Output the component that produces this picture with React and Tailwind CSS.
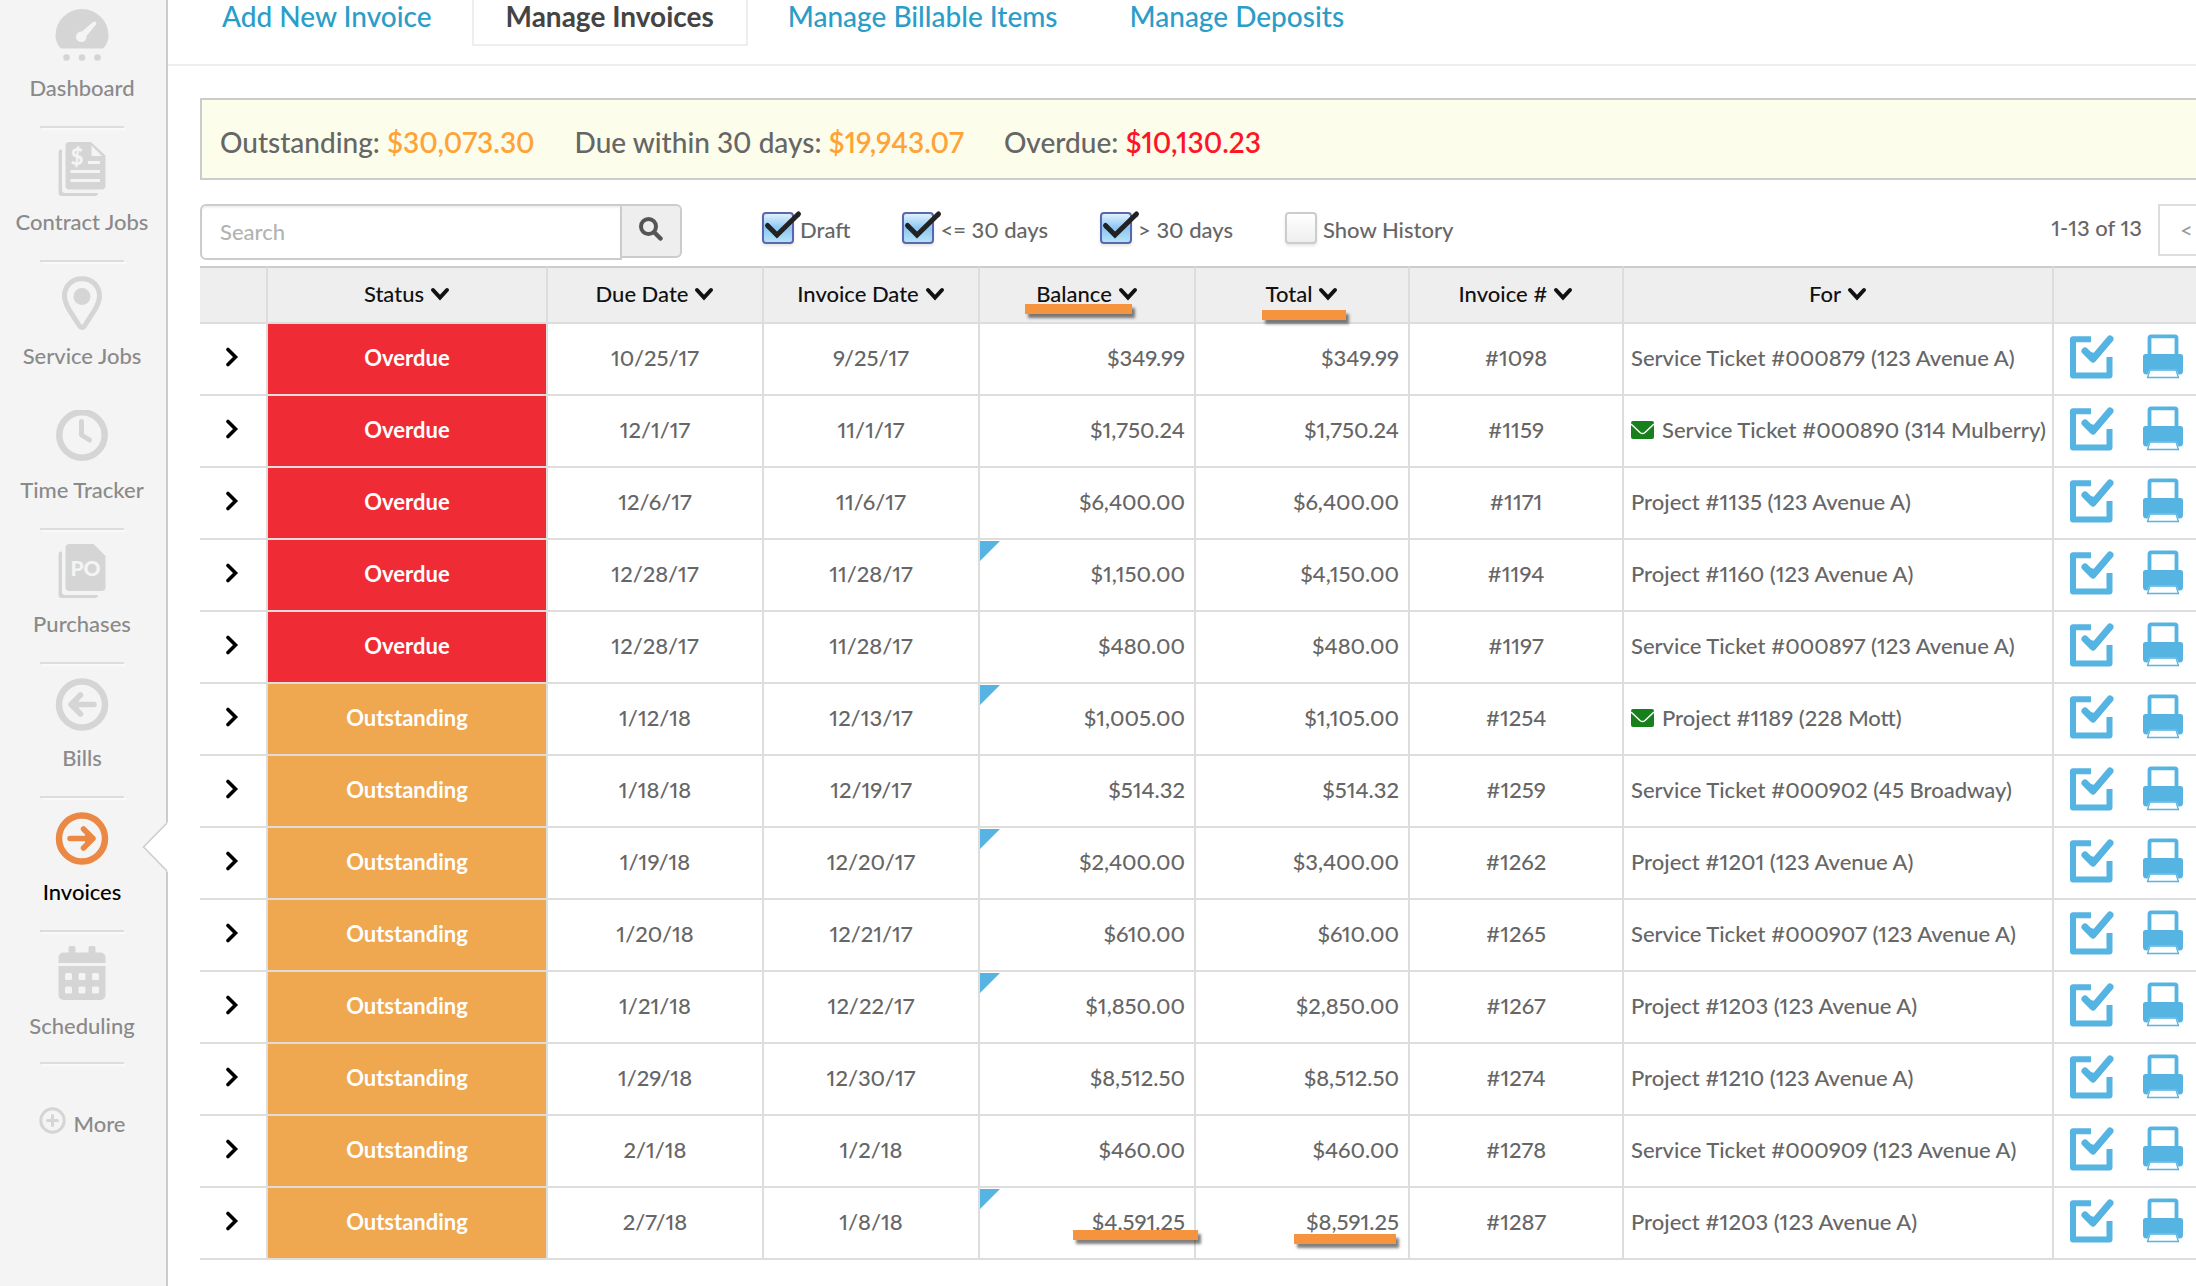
import { useState } from "react";
import clsx from "clsx";

const invoices = [
  { id: "1098", status: "Overdue", due: "10/25/17", date: "9/25/17", balance: "$349.99", total: "$349.99", target: "Service Ticket #000879 (123 Avenue A)" },
  { id: "1159", status: "Overdue", due: "12/1/17", date: "11/1/17", balance: "$1,750.24", total: "$1,750.24", target: "Service Ticket #000890 (314 Mulberry)", emailed: true },
  { id: "1171", status: "Overdue", due: "12/6/17", date: "11/6/17", balance: "$6,400.00", total: "$6,400.00", target: "Project #1135 (123 Avenue A)" },
  { id: "1194", status: "Overdue", due: "12/28/17", date: "11/28/17", balance: "$1,150.00", total: "$4,150.00", target: "Project #1160 (123 Avenue A)", partial: true },
  { id: "1197", status: "Overdue", due: "12/28/17", date: "11/28/17", balance: "$480.00", total: "$480.00", target: "Service Ticket #000897 (123 Avenue A)" },
  { id: "1254", status: "Outstanding", due: "1/12/18", date: "12/13/17", balance: "$1,005.00", total: "$1,105.00", target: "Project #1189 (228 Mott)", emailed: true, partial: true },
  { id: "1259", status: "Outstanding", due: "1/18/18", date: "12/19/17", balance: "$514.32", total: "$514.32", target: "Service Ticket #000902 (45 Broadway)" },
  { id: "1262", status: "Outstanding", due: "1/19/18", date: "12/20/17", balance: "$2,400.00", total: "$3,400.00", target: "Project #1201 (123 Avenue A)", partial: true },
  { id: "1265", status: "Outstanding", due: "1/20/18", date: "12/21/17", balance: "$610.00", total: "$610.00", target: "Service Ticket #000907 (123 Avenue A)" },
  { id: "1267", status: "Outstanding", due: "1/21/18", date: "12/22/17", balance: "$1,850.00", total: "$2,850.00", target: "Project #1203 (123 Avenue A)", partial: true },
  { id: "1274", status: "Outstanding", due: "1/29/18", date: "12/30/17", balance: "$8,512.50", total: "$8,512.50", target: "Project #1210 (123 Avenue A)" },
  { id: "1278", status: "Outstanding", due: "2/1/18", date: "1/2/18", balance: "$460.00", total: "$460.00", target: "Service Ticket #000909 (123 Avenue A)" },
  { id: "1287", status: "Outstanding", due: "2/7/18", date: "1/8/18", balance: "$4,591.25", total: "$8,591.25", target: "Project #1203 (123 Avenue A)", partial: true, marked: true },
];

const columns = [
  { label: "Status", width: "w-[280px]" },
  { label: "Due Date", width: "w-[216px]" },
  { label: "Invoice Date", width: "w-[216px]" },
  { label: "Balance", width: "w-[216px]", mark: "left-[45px] top-9 w-[107px]" },
  { label: "Total", width: "w-[214px]", mark: "left-[66px] top-[42px] w-[84px]" },
  { label: "Invoice #", width: "w-[214px]" },
  { label: "For", width: "" },
];

const DashboardIcon = () => (
  <svg width="54" height="54" viewBox="0 0 54 54" fill="#d5d5d5" aria-hidden="true">
    <path d="M6 40.500C2.500 37.500 .5 32 .5 27.500a26.500 26.500 0 0 1 53 0c0 4.500-2 10-5.500 13H6z" />
    <path d="M39.500 13.500a2 2 0 0 1 1.500 3L31.500 28a5.300 5.300 0 1 1-4.500-4.500l11-9.500z" fill="#f4f4f4" />
    <circle cx="11.500" cy="49.500" r="3.300" />
    <circle cx="27" cy="49.500" r="3.300" />
    <circle cx="42.500" cy="49.500" r="3.300" />
  </svg>
);

const ContractIcon = () => (
  <svg width="48" height="54" viewBox="0 0 48 54" fill="#d5d5d5" aria-hidden="true">
    <path d="M3.500 7.500C1.500 7.500.5 8.500.5 10.500V51c0 2 1 3 3 3H37c2 0 3-1 3-3H7c-2 0-3-1-3-3V7.500z" />
    <path d="M11 0h22l14.500 13.500V44c0 2-1.500 3.500-3.500 3.500H11c-2 0-3.500-1.500-3.500-3.500V3.500C7.500 1.500 9 0 11 0z" />
    <path d="M33.500 3.500v10.500H44z" fill="#f4f4f4" />
    <path d="M30 20.500h12M12.500 29.500H42M12.500 38.500H42" stroke="#f4f4f4" strokeWidth="3" />
    <text x="19" y="23" textAnchor="middle" fill="#f4f4f4" fontFamily="Lato, sans-serif" fontWeight="900" fontSize="22">$</text>
  </svg>
);

const PinIcon = () => (
  <svg width="42" height="54" viewBox="0 0 42 54" fill="none" aria-hidden="true">
    <path d="M21 2.700C10.500 2.700 3.500 10.500 3.500 20c0 5 2 9 4.500 13.500L18.500 50c1.300 2 3.700 2 5 0L34 33.500C36.500 29 38.500 25 38.500 20c0-9.500-7-17.300-17.500-17.300z" stroke="#d5d5d5" strokeWidth="5" />
    <circle cx="21" cy="20.500" r="8.500" fill="#d5d5d5" />
  </svg>
);

const ClockIcon = () => (
  <svg width="54" height="54" viewBox="0 2 54 54" fill="none" stroke="#d5d5d5" aria-hidden="true">
    <circle cx="27" cy="27" r="22.700" strokeWidth="6.500" />
    <path d="M26.500 13.500v13.500l8 5" strokeWidth="5" strokeLinecap="round" strokeLinejoin="round" />
  </svg>
);

const PurchaseIcon = () => (
  <svg width="48" height="54" viewBox="0 0 48 54" fill="#d5d5d5" aria-hidden="true">
    <path d="M3.500 7.500C1.500 7.500.5 8.500.5 10.500V51c0 2 1 3 3 3H37c2 0 3-1 3-3H7c-2 0-3-1-3-3V7.500z" />
    <path d="M11 0h24.500l12 12V43.500c0 2-1.500 3.500-3.500 3.500H11c-2 0-3.500-1.500-3.500-3.500v-40C7.500 1.500 9 0 11 0z" />
    <text x="27.500" y="32" textAnchor="middle" fill="#f4f4f4" fontFamily="Lato, sans-serif" fontWeight="900" fontSize="21">PO</text>
  </svg>
);

const ArrowCircleIcon = ({ right }) => (
  <svg width="54" height="54" viewBox="0 0 54 54" fill="none" stroke={right ? "#ea8844" : "#d5d5d5"} aria-hidden="true">
    <circle cx="27" cy="26.500" r="23" strokeWidth="6.500" />
    <g transform={right ? "matrix(-1 0 0 1 54 0)" : undefined} strokeWidth="5.500" strokeLinecap="round" strokeLinejoin="round">
      <path d="M17 26.500h22M25.500 17l-9.500 9.500 9.500 9.500" />
      <path d="M18 26.500l5-4v8z" fill={right ? "#ea8844" : "#d5d5d5"} strokeWidth="2" />
    </g>
  </svg>
);

const CalendarIcon = () => (
  <svg width="48" height="54" viewBox="0 0 48 54" fill="#d5d5d5" aria-hidden="true">
    <path d="M.5 17v-5.500a5 5 0 0 1 5-5h5V2c0-1.200.8-2 2-2h3c1.200 0 2 .8 2 2v4.500h13V2c0-1.200.8-2 2-2h3c1.200 0 2 .8 2 2v4.500h5a5 5 0 0 1 5 5V17z" />
    <path d="M.5 20h47v29a5 5 0 0 1-5 5h-37a5 5 0 0 1-5-5z" />
    <g fill="#f4f4f4">
      <rect x="7" y="27" width="7" height="7" rx="1.500" />
      <rect x="20.500" y="27" width="7" height="7" rx="1.500" />
      <rect x="34" y="27" width="7" height="7" rx="1.500" />
      <rect x="7" y="40.500" width="7" height="7" rx="1.500" />
      <rect x="20.500" y="40.500" width="7" height="7" rx="1.500" />
      <rect x="34" y="40.500" width="7" height="7" rx="1.500" />
    </g>
  </svg>
);

const navItems = [
  { label: "Dashboard", icon: <DashboardIcon />, divider: true },
  { label: "Contract Jobs", icon: <ContractIcon />, divider: true },
  { label: "Service Jobs", icon: <PinIcon /> },
  { label: "Time Tracker", icon: <ClockIcon />, divider: true },
  { label: "Purchases", icon: <PurchaseIcon />, divider: true },
  { label: "Bills", icon: <ArrowCircleIcon />, divider: true },
  { label: "Invoices", icon: <ArrowCircleIcon right />, divider: true, active: true },
  { label: "Scheduling", icon: <CalendarIcon />, divider: true },
];

const ChevronDown = () => (
  <svg width="20" height="14" viewBox="0 0 20 14" fill="none" stroke="#111" strokeWidth="4" strokeLinecap="round" aria-hidden="true">
    <path d="M3 3l7 7.500L17 3" />
  </svg>
);

const ChevronRight = () => (
  <svg width="14" height="20" viewBox="0 0 14 20" fill="none" stroke="#000" strokeWidth="3.600" strokeLinecap="round" aria-hidden="true">
    <path d="M3 2.500l7.500 7.500L3 17.500" />
  </svg>
);

const MailIcon = () => (
  <svg className="mr-2 shrink-0" width="23" height="18" viewBox="0 0 23 18" aria-hidden="true">
    <rect width="23" height="18" rx="2" fill="#177f1b" />
    <path d="M0 3l9 8.500c1.700 1.400 3.300 1.400 5 0L23 3" fill="none" stroke="#fff" strokeWidth="1.500" />
  </svg>
);

const CompleteIcon = () => (
  <svg width="44" height="44" viewBox="0 0 44 44" fill="none" stroke="#55b4e2" aria-hidden="true">
    <path d="M21 4.200H3V40.500H39.500V22" strokeWidth="6" strokeLinejoin="round" />
    <path d="M15 16l8 8L40 4" strokeWidth="7" strokeLinecap="round" strokeLinejoin="round" />
    <path d="M17 17l6 7 8-9-7 4z" fill="#55b4e2" strokeWidth="2" />
  </svg>
);

const PrintIcon = () => (
  <svg width="42" height="46" viewBox="0 0 42 46" fill="#55b4e2" aria-hidden="true">
    <path d="M7.500 22V4c0-1 .7-1.700 1.700-1.700h23.600c1 0 1.700.7 1.700 1.700v18" fill="#fff" stroke="#55b4e2" strokeWidth="3.800" />
    <path d="M3.500 20h35A2.500 2.500 0 0 1 41 22.500V37a3.500 3.500 0 0 1-3.500 3.500h-33A3.500 3.500 0 0 1 1 37V22.500A2.500 2.500 0 0 1 3.500 20z" />
    <path d="M7.500 35.500h27l3.500 9H4z" fill="#fff" />
    <path d="M8 36h26l2.500 7.500h-31z" fill="#fff" stroke="#55b4e2" strokeWidth="1.300" />
  </svg>
);

const Marker = ({ className }) => (
  <span className={clsx("absolute h-2.5 bg-[#f5933f] shadow-[3px_4px_3px_rgba(0,0,0,0.5)]", className)} />
);

const FilterBox = ({ label, defaultChecked }) => {
  const [checked, setChecked] = useState(defaultChecked);

  return (
    <label className="flex items-center gap-1.5">
      <span className="relative block size-8">
        <input
          type="checkbox"
          checked={checked}
          onChange={() => setChecked(!checked)}
          className="block size-8 appearance-none rounded border-2 border-[#ccc] bg-linear-to-b from-white to-[#eee] shadow-[0_2px_3px_rgba(0,0,0,0.1)] checked:border-[#5a66ae] checked:from-[#dff1fd] checked:via-[#8cc6f3] checked:to-[#b5e3f6]"
        />
        {checked && (
          <svg className="pointer-events-none absolute left-0 top-0 overflow-visible" width="40" height="32" viewBox="0 0 40 32" aria-hidden="true">
            <path d="M6 14l9 9L36 2.500" fill="none" stroke="#222" strokeWidth="5" />
            <path d="M6 14l-.5-.5M36 2.500l.5-.5" fill="none" stroke="#222" strokeWidth="5" strokeLinecap="round" />
          </svg>
        )}
      </span>
      <span className="pt-1">{label}</span>
    </label>
  );
};

const Sidebar = () => (
  <nav className="w-[168px] shrink-0 border-r-2 border-[#ccc] bg-[#f4f4f4] pr-0.5">
    <ul>
      {navItems.map((item, index) => (
        <li
          key={item.label}
          className={clsx("relative flex flex-col", index === 0 ? "pt-2" : "pt-3.5", index === navItems.length - 1 && "h-[132px]")}
        >
          <a
            href="#"
            className={clsx("flex flex-col items-center whitespace-nowrap", item.active ? "text-black" : "text-[#8a8a8a]")}
          >
            {item.icon}
            <span className="mt-3 leading-7">{item.label}</span>
          </a>
          <div className="min-h-0 flex-[0_1_24px]" />
          <div className={clsx("mx-10 h-0.5 shrink-0", item.divider && "bg-[#ddd] shadow-[2px_2px_1px_#fafafa]")} />
          {item.active && (
            <svg className="absolute -right-1 top-6" width="26" height="50" viewBox="0 0 26 50" aria-hidden="true">
              <path d="M26 0v50L24.500 49 1 25 24.500 1z" fill="#fff" />
              <path d="M25 1L1.500 25 25 49" fill="none" stroke="#ccc" strokeWidth="1.500" />
            </svg>
          )}
        </li>
      ))}
    </ul>
    <a href="#" className="mt-[38px] flex items-center justify-center gap-2 text-[#8a8a8a]">
      <svg width="27" height="27" viewBox="0 0 27 27" fill="none" stroke="#d5d5d5" strokeWidth="3" strokeLinecap="round" aria-hidden="true">
        <circle cx="13.500" cy="13.500" r="11.700" />
        <path d="M13.500 8.500v10M8.500 13.500h10" />
      </svg>
      <span className="pt-2">More</span>
    </a>
  </nav>
);

const Tabs = () => (
  <div className="flex h-[66px] items-start border-b-2 border-[#eee] pl-[18px] text-[28px] leading-8 text-[#2a9dc9]">
    <a href="#" className="px-9">Add New Invoice</a>
    <a href="#" aria-current="page" className="mx-1 border-x-2 border-b-2 border-[#eee] px-8 pb-3 font-bold text-[#444]">
      Manage Invoices
    </a>
    <a href="#" className="px-9">Manage Billable Items</a>
    <a href="#" className="px-9">Manage Deposits</a>
  </div>
);

const InvoiceTable = () => (
  <table className="w-full table-fixed border-separate border-spacing-0 text-center">
    <thead>
      <tr className="h-[58px] bg-[#eee] text-[#111]">
        <th className="w-[68px] border-b-2 border-r-2 border-t-2 border-[#ddd] border-t-[#ccc]" aria-label="Expand" />
        {columns.map((column) => (
          <th
            key={column.label}
            className={clsx("relative border-b-2 border-r-2 border-t-2 border-[#ddd] border-t-[#ccc] p-0 pb-1 font-medium", column.width)}
          >
            {column.mark && <Marker className={column.mark} />}
            <button className="relative inline-flex items-center gap-1.5 align-middle">
              {column.label}
              <ChevronDown />
            </button>
          </th>
        ))}
        <th className="w-[182px] border-b-2 border-t-2 border-[#ddd] border-t-[#ccc]" aria-label="Actions" />
      </tr>
    </thead>
    <tbody>
      {invoices.map((invoice) => (
        <tr key={invoice.id} className="h-[72px] *:border-b-2 *:border-r-2 *:border-[#ddd] *:pb-0.5 *:pt-0">
          <td>
            <button className="block w-full pb-0.5 pl-[25px]" aria-label="Expand row">
              <ChevronRight />
            </button>
          </td>
          <td
            className={clsx("font-bold text-white", invoice.status === "Overdue" ? "bg-[#ef2b36]" : "bg-[#efa750]")}
          >
            {invoice.status}
          </td>
          <td>{invoice.due}</td>
          <td>{invoice.date}</td>
          <td className="relative pr-[9px] text-right">
            {invoice.partial && (
              <svg className="absolute left-0 top-px" width="20" height="20" viewBox="0 0 20 20" aria-hidden="true">
                <path d="M0 0h20L0 20z" fill="#55b4e2" />
              </svg>
            )}
            {invoice.balance}
            {invoice.marked && <Marker className="left-[93px] top-[42px] z-10 w-[125px]" />}
          </td>
          <td className="relative pr-[9px] text-right">
            {invoice.total}
            {invoice.marked && <Marker className="left-[98px] top-[46px] w-[102px]" />}
          </td>
          <td>#{invoice.id}</td>
          <td className="pl-[7px] text-left">
            <span className="flex items-center whitespace-nowrap">
              {invoice.emailed && <MailIcon />}
              {invoice.target}
            </span>
          </td>
          <td className="pl-4">
            <div className="flex gap-7 pb-0.5">
              <button aria-label="Mark complete"><CompleteIcon /></button>
              <button aria-label="Print"><PrintIcon /></button>
            </div>
          </td>
        </tr>
      ))}
    </tbody>
  </table>
);

const App = () => {
  return (
    <div className="flex min-h-screen overflow-hidden bg-white font-['Lato',sans-serif] text-[22px] font-medium proportional-nums leading-7 text-[#666]">
      <Sidebar />
      <main className="min-w-0 flex-1 overflow-hidden">
        <Tabs />
        <div className="-mr-10 ml-8 mt-8">
          <section className="flex h-[82px] items-center gap-10 border-2 border-[#ccc] bg-[#fcfdeb] px-[18px] pt-1.5 text-[28px]">
            <p>Outstanding: <span className="font-semibold text-[#ffa338]">$30,073.30</span></p>
            <p>Due within 30 days: <span className="font-semibold text-[#ffa338]">$19,943.07</span></p>
            <p>Overdue: <span className="font-semibold text-[#ff1428]">$10,130.23</span></p>
          </section>

          <div className="mt-6 flex items-start pb-1.5">
            <form className="flex w-[482px] items-start" onSubmit={(e) => e.preventDefault()}>
              <input
                type="search"
                placeholder="Search"
                aria-label="Search"
                className="h-14 min-w-0 flex-1 rounded-l-md border-2 border-[#ccc] px-[18px] pb-0.5 shadow-[inset_0_2px_2px_rgba(0,0,0,0.06)] placeholder:text-[#b3b3b3]"
              />
              <button
                aria-label="Search invoices"
                className="flex h-[54px] w-[60px] items-center justify-center rounded-r-md border-2 border-l-0 border-[#ccc] bg-[#eee] pb-1"
              >
                <svg width="24" height="24" viewBox="0 0 24 24" fill="none" stroke="#555" aria-hidden="true">
                  <circle cx="9.500" cy="9.500" r="7.500" strokeWidth="4" />
                  <path d="M15.500 15.500l6 6" strokeWidth="4.500" strokeLinecap="round" />
                </svg>
              </button>
            </form>
            <div className="ml-20 flex gap-13 pt-2">
              <FilterBox label="Draft" defaultChecked />
              <FilterBox label="<= 30 days" defaultChecked />
              <FilterBox label="> 30 days" defaultChecked />
              <FilterBox label="Show History" defaultChecked={false} />
            </div>
            <div className="ml-auto flex items-start gap-4">
              <span className="pt-2.5">1-13 of 13</span>
              <button className="h-[52px] w-[78px] border-2 border-[#ddd] pl-5 text-left text-[#999]" aria-label="Previous page">
                &lt;
              </button>
            </div>
          </div>

          <InvoiceTable />
        </div>
      </main>
    </div>
  );
};

export default App;
